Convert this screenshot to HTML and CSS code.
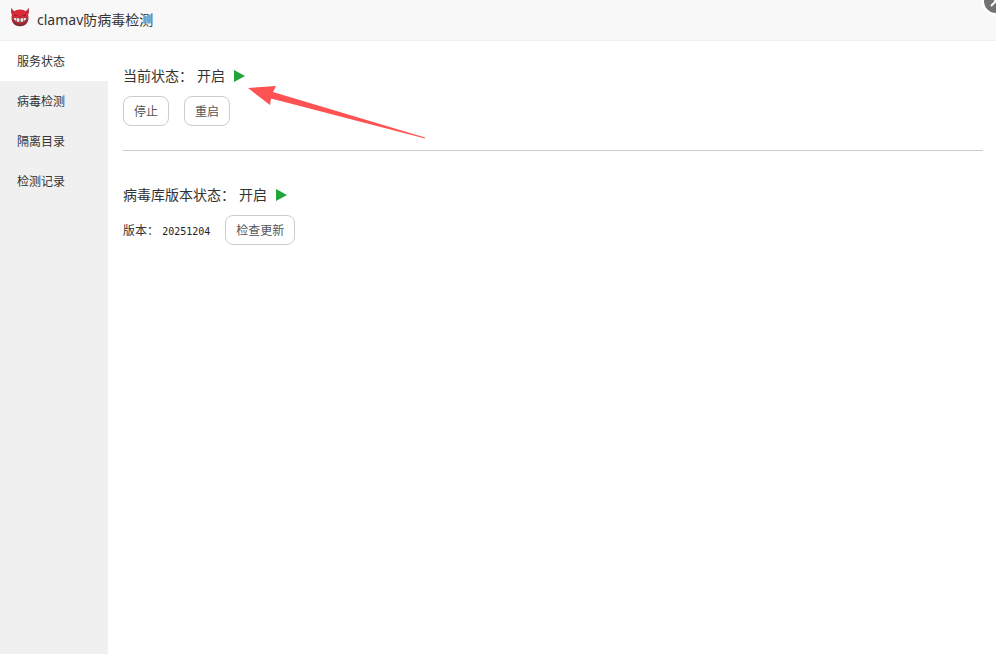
FILE: index.html
```html
<!DOCTYPE html>
<html lang="zh-CN">
<head>
  <meta charset="UTF-8">
  <meta name="viewport" content="width=device-width, initial-scale=1.0">
  <title>clamav防病毒检测</title>
  <link rel="stylesheet" href="styles.css">
</head>
<body>
  <div class="dialog">
    <header class="dialog-title">
      <svg class="logo" width="20" height="20" viewBox="0 0 20 20" aria-hidden="true">
        <path d="M1.500 0.500C0.500 4 1 7 2.500 8.500L5.500 4.500C3.500 4 2 2.500 1.500 0.500Z" fill="#b5303a"/>
        <path d="M18.500 0.500C19.500 4 19 7 17.500 8.500L14.500 4.500C16.500 4 18 2.500 18.500 0.500Z" fill="#b5303a"/>
        <path d="M10 2.500C15 2.500 18.500 5.500 18.500 10.500C18.500 16 14.800 19.200 10 19.200S1.500 16 1.500 10.500C1.500 5.500 5 2.500 10 2.500Z" fill="#d92a38"/>
        <path d="M1.700 12C2.700 17 6 19.200 10 19.200S17.300 17 18.300 12C16 15.500 13 16.500 10 16.500S4 15.500 1.700 12Z" fill="#7d3038"/>
        <path d="M4 7.200L8.500 9L5 9ZM16 7.200L11.500 9L15 9Z" fill="#8c1c26"/>
        <path d="M2.500 9.800C6 11.500 14 11.500 17.500 9.800C17.300 13.500 14.500 15.500 10 15.500S2.700 13.500 2.500 9.800Z" fill="#6b3238"/>
        <path d="M3.500 10.800L6.500 11.300V14.200C4.800 13.600 3.700 12.500 3.500 10.800ZM7 11.300H9.500V14.700H7ZM10.500 11.300H13V14.700H10.500ZM13.500 11.300L16.500 10.800C16.300 12.500 15.200 13.600 13.500 14.200Z" fill="#f2e8e8"/>
        <path d="M7.800 9.300Q10 8 12.200 9.300L10 11.500Z" fill="#c42530"/>
      </svg>
      <span>clamav防病毒检测</span>
      <button class="close" type="button" aria-label="关闭">
        <svg width="24" height="24" viewBox="0 0 24 24" aria-hidden="true">
          <circle cx="12" cy="12" r="12" fill="#737373"/>
          <path d="M7 7L17 17M17 7L7 17" stroke="#fff" stroke-width="2"/>
        </svg>
      </button>
    </header>
    <div class="dialog-body">
      <nav class="menu">
        <a class="on" href="#service">服务状态</a>
        <a href="#scan">病毒检测</a>
        <a href="#quarantine">隔离目录</a>
        <a href="#logs">检测记录</a>
      </nav>
      <main class="content">
        <section class="service" id="service">
          <p class="status">
            <span>当前状态：</span>
            <span>开启</span>
            <svg class="play" width="11" height="12" viewBox="0 0 11 12"><path d="M0 0L11 6L0 12Z"/></svg>
          </p>
          <div class="actions">
            <button class="btn" type="button">停止</button>
            <button class="btn" type="button">重启</button>
          </div>
          <svg class="pointer" width="178" height="54" viewBox="0 0 178 54" aria-hidden="true">
            <path d="M0 2L28 0L25 6L177 51.500L177 52.500L23 12.500L22 19Z" fill="#ff5252"/>
          </svg>
        </section>
        <section class="database">
          <p class="status">
            <span>病毒库版本状态：</span>
            <span>开启</span>
            <svg class="play" width="11" height="12" viewBox="0 0 11 12"><path d="M0 0L11 6L0 12Z"/></svg>
          </p>
          <div class="actions">
            <p class="version">版本： <span class="number">20251204</span></p>
            <button class="btn" type="button">检查更新</button>
          </div>
        </section>
      </main>
    </div>
  </div>
</body>
</html>
```

FILE: styles.css
```css
* {
  box-sizing: border-box;
}
body {
  margin: 0;
  font-family: "Noto Sans", "Noto Sans CJK SC", sans-serif;
  font-size: 12px;
  color: #333;
  background: #fff;
}
p {
  margin: 0;
}
.dialog {
  display: flex;
  flex-direction: column;
  min-height: 100vh;
  position: relative;
  overflow: hidden;
}
.dialog-title {
  display: flex;
  align-items: center;
  gap: 7px;
  height: 41px;
  padding: 0 10px 2px;
  font-size: 14px;
  background: #f8f8f8;
  border-bottom: 1px solid #eee;
}
.logo {
  margin-bottom: 4px;
}
.close {
  position: absolute;
  top: -14px;
  right: -15px;
  width: 30px;
  height: 30px;
  padding: 0;
  border: 3px solid #fff;
  border-radius: 50%;
  background: #fff;
  cursor: pointer;
}
.close svg {
  display: block;
}
.dialog-body {
  display: flex;
  flex: 1;
}
.menu {
  width: 108px;
  flex-shrink: 0;
  background: #f0f0f0;
}
.menu a {
  display: block;
  height: 40px;
  padding-left: 17px;
  line-height: 42px;
  color: #333;
  text-decoration: none;
}
.menu .on {
  background: #fff;
}
.content {
  flex: 1;
  padding: 25px 13px 0 15px;
}
.service {
  position: relative;
  padding-bottom: 24px;
  margin-bottom: 34px;
  border-bottom: 1px solid #ccc;
}
.status {
  display: flex;
  align-items: center;
  gap: 4px;
  height: 20px;
  padding-bottom: 2px;
  margin-bottom: 10px;
  font-size: 14px;
}
.play {
  margin: 2px 0 0 5px;
  fill: #20a53a;
}
.actions {
  display: flex;
  align-items: center;
  gap: 15px;
}
.btn {
  height: 30px;
  padding: 0 10px;
  font-family: inherit;
  font-size: 12px;
  color: #555;
  background: #fff;
  border: 1px solid #ccc;
  border-radius: 8px;
  cursor: pointer;
}
.number {
  font-family: "DejaVu Sans Mono", monospace;
  font-size: 10px;
  color: #222;
}
/* red arrow over the running state */
.pointer {
  position: absolute;
  top: 20px;
  left: 125px;
}
```
